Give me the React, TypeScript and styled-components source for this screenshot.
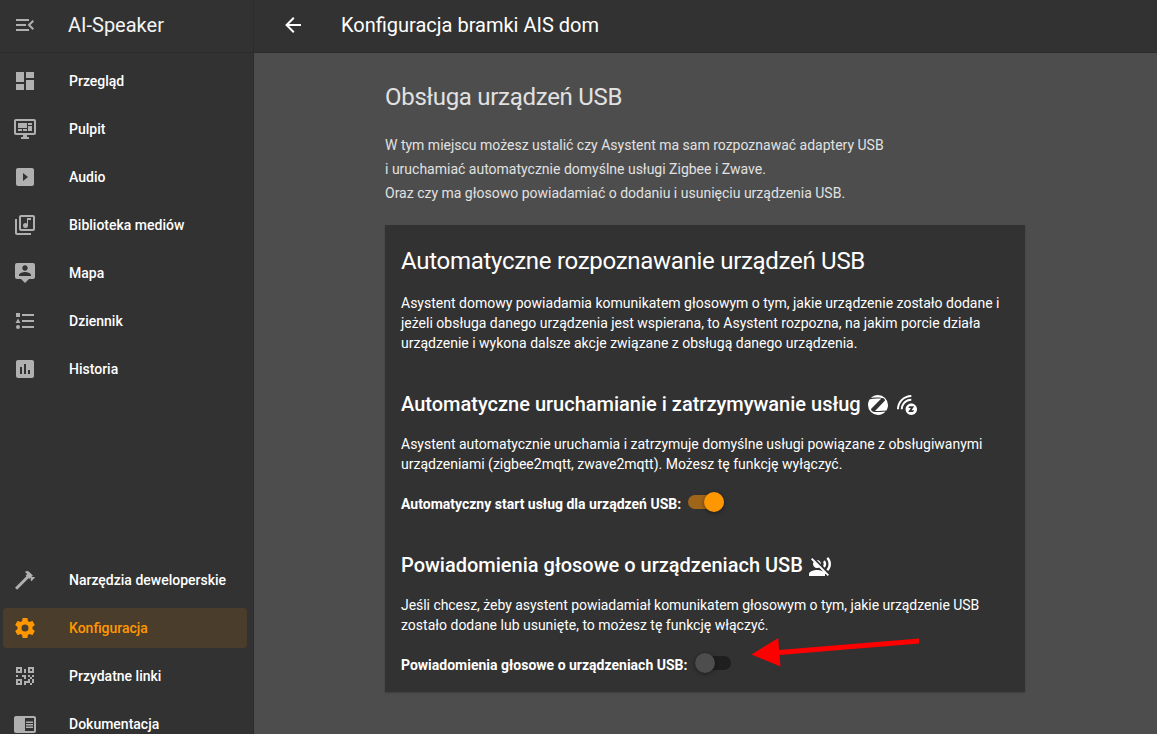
import React from "react";
import styled, { createGlobalStyle } from "styled-components";
import { MdChromeReaderMode, MdVoiceOverOff, MdOutlineLibraryMusic } from "react-icons/md";

const GlobalStyle = createGlobalStyle`
  html, body { margin: 0; height: 100%; overflow: hidden; background: #4d4d4d; }
  body { font-family: Roboto, "Noto Sans", sans-serif; font-size: 14px; color: #fff; }
  * { box-sizing: border-box; }
  h1, h2, h3, p { margin: 0; font-weight: 400; }
`;

const paths = {
  menu: "M21,15.61L19.59,17L14.58,12L19.59,7L21,8.39L17.44,12L21,15.61M3,6H16V8H3V6M3,13V11H13V13H3M3,18V16H16V18H3Z",
  dashboard: "M13,3V9H21V3M13,21H21V11H13M3,21H11V15H3M3,13H11V3H3V13Z",
  monitor:
    "M21,16V4H3V16H21M21,2A2,2 0 0,1 23,4V16A2,2 0 0,1 21,18H14V20H16V22H8V20H10V18H3C1.89,18 1,17.1 1,16V4C1,2.89 1.89,2 3,2H21M5,6H14V11H5V6M15,6H19V8H15V6M19,9V14H15V9H19M5,12H9V14H5V12M10,12H14V14H10V12Z",
  play: "M19,3H5C3.89,3 3,3.89 3,5V19A2,2 0 0,0 5,21H19A2,2 0 0,0 21,19V5C21,3.89 20.1,3 19,3M10,16V8L15,12",
  account:
    "M20,2H4A2,2 0 0,0 2,4V16A2,2 0 0,0 4,18H8L12,22L16,18H20A2,2 0 0,0 22,16V4A2,2 0 0,0 20,2M12,4.3C13.5,4.3 14.7,5.5 14.7,7C14.7,8.5 13.5,9.7 12,9.7C10.5,9.7 9.3,8.5 9.3,7C9.3,5.5 10.5,4.3 12,4.3M18,15H6V14.1C6,12.1 10,11 12,11C14,11 18,12.1 18,14.1V15Z",
  list: "M5,9.5L7.5,14H2.5L5,9.5M3,4H7V8H3V4M5,20A2,2 0 0,0 7,18A2,2 0 0,0 5,16A2,2 0 0,0 3,18A2,2 0 0,0 5,20M9,5V7H21V5H9M9,19H21V17H9V19M9,13H21V11H9V13Z",
  chart:
    "M9,17H7V10H9V17M13,17H11V7H13V17M17,17H15V13H17V17M19,3H5A2,2 0 0,0 3,5V19A2,2 0 0,0 5,21H19A2,2 0 0,0 21,19V5A2,2 0 0,0 19,3Z",
  hammer:
    "M2 19.63L13.43 8.2L12.72 7.5L14.14 6.07L12 3.89C13.2 2.7 15.09 2.7 16.27 3.89L19.87 7.5L18.45 8.91H21.29L22 9.62L18.45 13.21L17.74 12.5V9.62L16.27 11.04L15.56 10.33L4.13 21.76L2 19.63Z",
  cog: "M12,15.5A3.5,3.5 0 0,1 8.5,12A3.5,3.5 0 0,1 12,8.5A3.5,3.5 0 0,1 15.5,12A3.5,3.5 0 0,1 12,15.5M19.43,12.97C19.47,12.65 19.5,12.33 19.5,12C19.5,11.67 19.47,11.34 19.43,11L21.54,9.37C21.73,9.22 21.78,8.95 21.66,8.73L19.66,5.27C19.54,5.05 19.27,4.96 19.05,5.05L16.56,6.05C16.04,5.66 15.5,5.32 14.87,5.07L14.5,2.42C14.46,2.18 14.25,2 14,2H10C9.75,2 9.54,2.18 9.5,2.42L9.13,5.07C8.5,5.32 7.96,5.66 7.44,6.05L4.95,5.05C4.73,4.96 4.46,5.05 4.34,5.27L2.34,8.73C2.21,8.95 2.27,9.22 2.46,9.37L4.57,11C4.53,11.34 4.5,11.67 4.5,12C4.5,12.33 4.53,12.65 4.57,12.97L2.46,14.63C2.27,14.78 2.21,15.05 2.34,15.27L4.34,18.73C4.46,18.95 4.73,19.03 4.95,18.95L7.44,17.94C7.96,18.34 8.5,18.68 9.13,18.93L9.5,21.58C9.54,21.82 9.75,22 10,22H14C14.25,22 14.46,21.82 14.5,21.58L14.87,18.93C15.5,18.67 16.04,18.34 16.56,17.94L19.05,18.95C19.27,19.03 19.54,18.95 19.66,18.73L21.66,15.27C21.78,15.05 21.73,14.78 21.54,14.63L19.43,12.97Z",
  qrcode:
    "M3,11H5V13H3V11M11,5H13V9H11V5M9,11H13V15H11V13H9V11M15,11H17V13H19V11H21V13H19V15H21V19H19V21H17V19H13V21H11V17H15V15H17V13H15V11M19,19V15H17V19H19M15,3H21V9H15V3M17,5V7H19V5H17M3,3H9V9H3V3M5,5V7H7V5H5M3,15H9V21H3V15M5,17V19H7V17H5Z",
  back: "M20,11V13H8L13.5,18.5L12.08,19.92L4.16,12L12.08,4.08L13.5,5.5L8,11H20Z",
  zigbee:
    "M4.06,6.15C3.97,6.17 3.88,6.22 3.8,6.28C2.66,7.9 2,9.87 2,12A10,10 0 0,0 12,22C15,22 17.68,20.68 19.5,18.6L17,18.85C14.25,19.15 11.45,19.19 8.66,18.96C7.95,18.94 7.24,18.76 6.59,18.45C5.73,18.06 5.15,17.23 5.07,16.29C5.06,16.13 5.12,16 5.23,15.87L7.42,13.6L15.1,5.7V5.6H10.84C8.57,5.64 6.31,5.82 4.06,6.15M20.17,17.5C20.26,17.47 20.35,17.44 20.43,17.39C21.42,15.83 22,14 22,12A10,10 0 0,0 12,2C9.22,2 6.7,3.13 4.89,4.97H5.17C8.28,4.57 11.43,4.47 14.56,4.65C15.5,4.64 16.45,4.82 17.33,5.17C18.25,5.53 18.89,6.38 19,7.37C19,7.53 18.93,7.7 18.82,7.82L9.71,17.19L9,17.95V18.06H13.14C15.5,18 17.84,17.81 20.17,17.5Z",
  zwave:
    "M16.3,10.58C13.14,10.58 10.6,13.13 10.6,16.28C10.6,19.43 13.15,22 16.3,22C19.45,22 22,19.43 22,16.28C22,13.13 19.45,10.58 16.3,10.58M18,19.08H13.19L15.81,15H13.31L14.4,13.23H19.18L16.57,17.31H19.18L18,19.08M16.3,3.93V2C8.41,2 2,8.42 2,16.31H3.92C3.94,9.46 9.5,3.93 16.3,3.93M16.3,7.74V5.82C10.5,5.82 5.81,10.53 5.81,16.31H7.73C7.75,11.58 11.59,7.74 16.3,7.74",
};

const Svg = styled.svg`
  display: block;
  flex: none;
  width: 24px;
  height: 24px;
  fill: currentColor;
`;

const Icon = ({ name }: { name: keyof typeof paths }) => (
  <Svg viewBox="0 0 24 24">
    <path fillRule="evenodd" d={paths[name]} />
  </Svg>
);

const Page = styled.div`
  display: flex;
  width: 100%;
  height: 100vh;
  overflow: hidden;
`;

const Sidebar = styled.aside`
  display: flex;
  flex-direction: column;
  flex: none;
  width: 254px;
  height: 100vh;
  overflow: hidden;
  background: #323232;
  border-right: 1px solid #2c2c2c;
`;

const SidebarHeader = styled.header`
  display: flex;
  align-items: center;
  flex: none;
  gap: 31px;
  height: 53px;
  padding: 0 13px 3px;
  border-bottom: 1px solid #2c2c2c;
  color: #b0b0b0;
`;

const Brand = styled.span`
  font-size: 20px;
  line-height: 24px;
  color: #f4f4f4;
`;

const Menu = styled.nav<{ $pushed?: boolean }>`
  display: flex;
  flex-direction: column;
  flex: none;
  gap: 8px;
  padding: 8px 6px 0 3px;
  ${(p) => p.$pushed && "margin-top: 163px;"}
`;

const MenuItem = styled.a<{ $active?: boolean }>`
  display: flex;
  align-items: center;
  flex: none;
  gap: 32px;
  height: 40px;
  padding-left: 10px;
  border-radius: 4px;
  font-size: 14px;
  font-weight: 500;
  line-height: 20px;
  color: ${(p) => (p.$active ? "#ff9800" : "#fff")};
  background: ${(p) => (p.$active ? "#4b3d2b" : "transparent")};
  & > svg { color: ${(p) => (p.$active ? "#ff9800" : "#b0b0b0")}; flex: none; }
`;

const Main = styled.main`
  display: flex;
  flex-direction: column;
  flex: 1;
  min-width: 0;
`;

const Toolbar = styled.header`
  display: flex;
  align-items: center;
  flex: none;
  gap: 36px;
  height: 53px;
  padding: 0 27px 3px;
  background: #323232;
  border-bottom: 1px solid #2c2c2c;
`;

const ToolbarTitle = styled.h1`
  font-size: 20px;
  line-height: 24px;
`;

const Content = styled.div`
  width: 640px;
  margin-left: 131px;
  padding-top: 28px;
`;

const Heading = styled.h2`
  font-size: 24px;
  letter-spacing: -0.012em;
  line-height: 32px;
  color: #e1e1e1;
`;

const Intro = styled.p`
  padding-top: 20px;
  line-height: 24px;
  color: #e1e1e1;
`;

const Card = styled.section`
  height: 467px;
  margin-top: 20px;
  padding: 16px 16px 0;
  background: #323232;
  box-shadow: 0 1px 2px rgba(0, 0, 0, 0.2);
`;

const CardTitle = styled.h2`
  font-size: 24px;
  letter-spacing: -0.012em;
  line-height: 40px;
`;

const SectionTitle = styled.h3<{ $drop?: number }>`
  display: flex;
  align-items: center;
  gap: 5px;
  height: 28px;
  margin-top: 37px;
  font-size: 20px;
  font-weight: 500;
  line-height: 28px;
  & > svg { margin-top: ${(p) => p.$drop ?? 2}px; }
`;

const Text = styled.p<{ $top: number }>`
  padding-top: ${(p) => p.$top}px;
  line-height: 20px;
`;

const TightLine = styled.span`
  letter-spacing: -0.045px;
`;

const SettingRow = styled.label<{ $gap?: number }>`
  display: flex;
  align-items: center;
  gap: ${(p) => p.$gap ?? 7}px;
  height: 20px;
  margin-top: 20px;
  font-weight: 700;
  line-height: 20px;
`;

const Track = styled.span<{ $on?: boolean }>`
  display: flex;
  align-items: center;
  justify-content: ${(p) => (p.$on ? "flex-end" : "flex-start")};
  width: 36px;
  height: 14px;
  margin-bottom: 4px;
  border-radius: 7px;
  background: ${(p) => (p.$on ? "#9f661a" : "#1f1f1f")};
`;

const Thumb = styled.span<{ $on?: boolean }>`
  flex: none;
  width: 20px;
  height: 20px;
  border-radius: 50%;
  background: ${(p) => (p.$on ? "#ff9800" : "#4d4d4d")};
  box-shadow: 0 1px 4px rgba(0, 0, 0, 0.45);
`;

const Switch = ({ on }: { on?: boolean }) => (
  <Track $on={on}>
    <Thumb $on={on} />
  </Track>
);

const Arrow = styled.svg`
  position: absolute;
  left: 750px;
  top: 635px;
  width: 172px;
  height: 34px;
  fill: #fe0000;
`;

export default function App() {
  return (
    <Page>
      <GlobalStyle />
      <Sidebar>
        <SidebarHeader>
          <Icon name="menu" />
          <Brand>AI-Speaker</Brand>
        </SidebarHeader>
        <Menu>
          <MenuItem><Icon name="dashboard" />Przegląd</MenuItem>
          <MenuItem><Icon name="monitor" />Pulpit</MenuItem>
          <MenuItem><Icon name="play" />Audio</MenuItem>
          <MenuItem><MdOutlineLibraryMusic size={24} />Biblioteka mediów</MenuItem>
          <MenuItem><Icon name="account" />Mapa</MenuItem>
          <MenuItem><Icon name="list" />Dziennik</MenuItem>
          <MenuItem><Icon name="chart" />Historia</MenuItem>
        </Menu>
        <Menu $pushed>
          <MenuItem><Icon name="hammer" />Narzędzia deweloperskie</MenuItem>
          <MenuItem $active><Icon name="cog" />Konfiguracja</MenuItem>
          <MenuItem><Icon name="qrcode" />Przydatne linki</MenuItem>
          <MenuItem><MdChromeReaderMode size={24} />Dokumentacja</MenuItem>
        </Menu>
      </Sidebar>
      <Main>
        <Toolbar>
          <Icon name="back" />
          <ToolbarTitle>Konfiguracja bramki AIS dom</ToolbarTitle>
        </Toolbar>
        <Content>
          <Heading>Obsługa urządzeń USB</Heading>
          <Intro>
            W tym miejscu możesz ustalić czy Asystent ma sam rozpoznawać adaptery USB
            <br />i uruchamiać automatycznie domyślne usługi Zigbee i Zwave.
            <br />Oraz czy ma głosowo powiadamiać o dodaniu i usunięciu urządzenia USB.
          </Intro>
          <Card>
            <CardTitle>Automatyczne rozpoznawanie urządzeń USB</CardTitle>
            <Text $top={12}>
              Asystent domowy powiadamia komunikatem głosowym o tym, jakie urządzenie zostało dodane i
              jeżeli obsługa danego urządzenia jest wspierana, to Asystent rozpozna, na jakim porcie działa
              urządzenie i wykona dalsze akcje związane z obsługą danego urządzenia.
            </Text>
            <SectionTitle>
              Automatyczne uruchamianie i zatrzymywanie usług
              <Icon name="zigbee" />
              <Icon name="zwave" />
            </SectionTitle>
            <Text $top={16}>
              Asystent automatycznie uruchamia i zatrzymuje domyślne usługi powiązane z obsługiwanymi
              urządzeniami (zigbee2mqtt, zwave2mqtt). Możesz tę funkcję wyłączyć.
            </Text>
            <SettingRow>Automatyczny start usług dla urządzeń USB:<Switch on /></SettingRow>
            <SectionTitle $drop={4}>
              Powiadomienia głosowe o urządzeniach USB
              <MdVoiceOverOff size={24} />
            </SectionTitle>
            <Text $top={16}>
              <TightLine>
                Jeśli chcesz, żeby asystent powiadamiał komunikatem głosowym o tym, jakie urządzenie USB
              </TightLine>
              <br />
              zostało dodane lub usunięte, to możesz tę funkcję włączyć.
            </Text>
            <SettingRow $gap={8}>Powiadomienia głosowe o urządzeniach USB:<Switch /></SettingRow>
          </Card>
        </Content>
      </Main>
      <Arrow viewBox="750 635 172 34">
        <path d="M751.5 654.5L778.3 638L779 650L919 638.5V643.5L779.5 655L780.5 666.5Z" />
      </Arrow>
    </Page>
  );
}
